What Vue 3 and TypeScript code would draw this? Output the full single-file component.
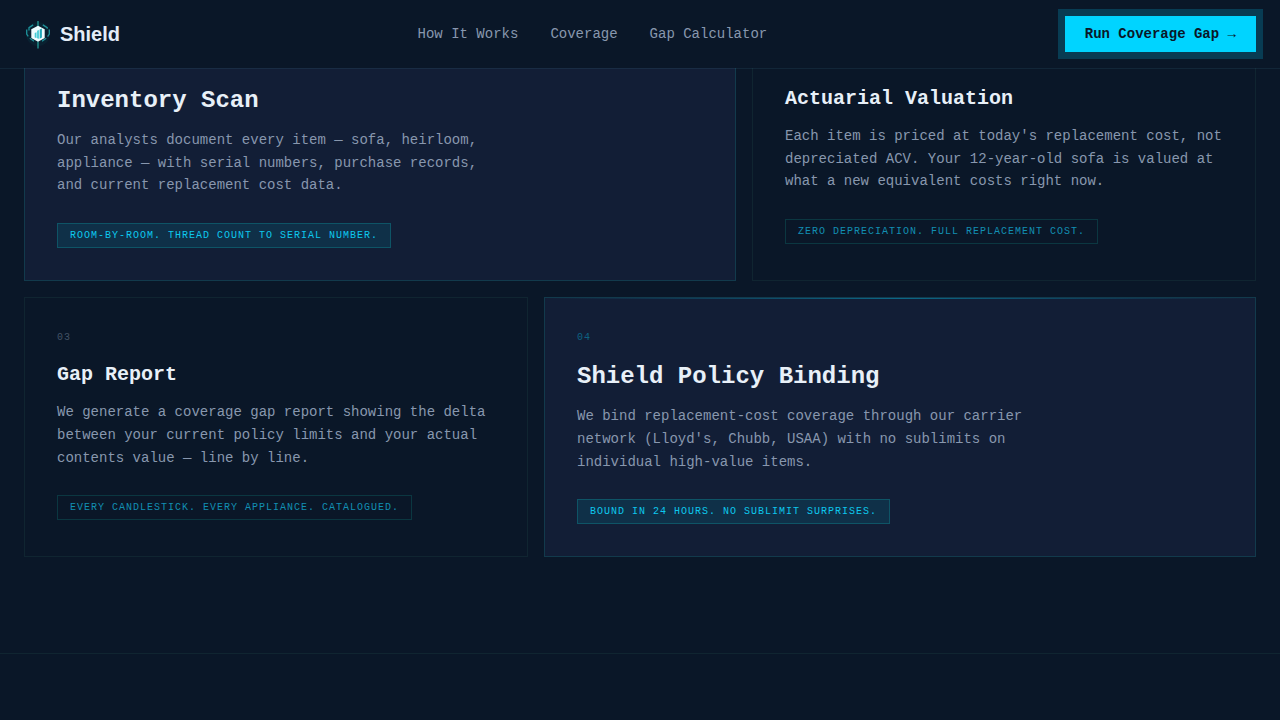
<script setup lang="ts">
interface Step {
  id: string
  title: string
  body: string
  tag: string
  featured: boolean
}

const links: string[] = ['How It Works', 'Coverage', 'Gap Calculator']

const steps: Step[] = [
  {
    id: '01',
    title: 'Inventory Scan',
    body: 'Our analysts document every item — sofa, heirloom, appliance — with serial numbers, purchase records, and current replacement cost data.',
    tag: 'Room-by-room. Thread count to serial number.',
    featured: true,
  },
  {
    id: '02',
    title: 'Actuarial Valuation',
    body: "Each item is priced at today's replacement cost, not depreciated ACV. Your 12-year-old sofa is valued at what a new equivalent costs right now.",
    tag: 'Zero depreciation. Full replacement cost.',
    featured: false,
  },
  {
    id: '03',
    title: 'Gap Report',
    body: 'We generate a coverage gap report showing the delta between your current policy limits and your actual contents value — line by line.',
    tag: 'Every candlestick. Every appliance. Catalogued.',
    featured: false,
  },
  {
    id: '04',
    title: 'Shield Policy Binding',
    body: "We bind replacement-cost coverage through our carrier network (Lloyd's, Chubb, USAA) with no sublimits on individual high-value items.",
    tag: 'Bound in 24 hours. No sublimit surprises.',
    featured: true,
  },
]
</script>

<template>
  <div class="page">
    <header class="header">
      <a class="brand">
        <svg class="logo" viewBox="0 0 28 28" fill="none">
          <circle cx="14" cy="14" r="12" fill="#0b3844" opacity="0.3" />
          <path d="M14 1v6M14 21.5v7" stroke="#2bc4b8" stroke-width="1" />
          <path
            d="M5 10.4V7.6l4.2-2.7M18.8 4.9l4.4 2.7v1.2M25.3 9.5v4.6l-1.7 2.6M2.7 9.5v4.6l1.5 2.2M5.8 18.3l4.2 3M22.2 18.3l-4.2 3"
            stroke="#1d929b"
            stroke-width="1.3"
          />
          <path d="M14 5.7l6.7 3.5v8.8L14 21.8 7.3 18V9.2z" fill="#eefcff" />
          <path d="M10.7 13l1.8-.8v5.9l-1.8-.5zM13.1 10.8l1.8-.9v8.9l-1.8-.5z" fill="#45cbd5" />
          <path d="M15.7 9.5l2.2-.9v8.8l-2.2 1.3z" fill="#20a9b9" />
        </svg>
        <span class="brand-name">Shield</span>
      </a>
      <nav class="nav">
        <a v-for="link in links" :key="link">{{ link }}</a>
      </nav>
      <button class="cta" type="button">Run Coverage Gap →</button>
    </header>

    <main class="steps">
      <article v-for="step in steps" :key="step.id" class="card" :class="{ featured: step.featured }">
        <span class="num">{{ step.id }}</span>
        <h3>{{ step.title }}</h3>
        <p>{{ step.body }}</p>
        <span class="tag">{{ step.tag }}</span>
      </article>
    </main>
    <section class="next"></section>
  </div>
</template>

<style>
body {
  margin: 0;
  background: #0a1728;
}
</style>

<style scoped>
.page {
  height: 720px;
  overflow: hidden;
  display: flex;
  flex-direction: column;
  background: #0a1728;
  font-family: 'Liberation Mono', monospace;
  color: #e8f0f8;
}
.header {
  position: relative;
  z-index: 2;
  box-sizing: border-box;
  flex: none;
  height: 69px;
  padding: 0 24px;
  display: flex;
  align-items: center;
  justify-content: space-between;
  background: #0a1728;
  background-clip: padding-box;
  border-bottom: 1px solid rgba(60, 120, 140, 0.16);
}
.brand {
  display: flex;
  align-items: center;
  gap: 8px;
}
.logo {
  width: 28px;
  height: 28px;
  overflow: visible;
}
.brand-name {
  font: bold 20px/28px 'Liberation Sans', sans-serif;
  color: #e4edf8;
}
.nav {
  display: flex;
  gap: 32px;
  font-size: 14px;
  line-height: 20px;
  color: #8897ae;
}
.cta {
  border: 0;
  padding: 8px 20px;
  font: bold 14px/20px 'Liberation Mono', monospace;
  background: #00d4ff;
  color: #0a1728;
  box-shadow: 0 0 0 7px rgba(0, 212, 255, 0.2);
}
.steps {
  flex: none;
  margin-top: -48.25px;
  padding: 0 24px 96px;
  display: grid;
  grid-template-columns: repeat(12, 1fr);
  gap: 16px;
}
.card {
  position: relative;
  box-sizing: border-box;
  grid-column: span 5;
  height: 260.25px;
  padding: 32px;
  display: flex;
  flex-direction: column;
  align-items: flex-start;
  border: 1px solid #102531;
}
.card.featured {
  grid-column: span 7;
  background: #121e36;
  border-color: #123a4c;
}
.card.featured::before {
  content: '';
  position: absolute;
  inset: 0 0 auto;
  height: 1px;
  background: linear-gradient(90deg, transparent, rgba(0, 212, 255, 0.4), transparent);
}
.num {
  font-size: 10px;
  line-height: 15px;
  letter-spacing: 1px;
  color: #435365;
  margin-bottom: 16px;
}
.featured .num {
  color: #0e6282;
}
h3 {
  margin: 0 0 12px;
  font-size: 20px;
  line-height: 28px;
  font-weight: bold;
}
.featured h3 {
  font-size: 24px;
  line-height: 32px;
}
p {
  margin: 0 0 25.75px;
  max-width: 448px;
  font-size: 14px;
  line-height: 22.75px;
  color: #8897ae;
}
.tag {
  padding: 6px 12px;
  border: 1px solid #0b3741;
  font-size: 10px;
  line-height: 11px;
  letter-spacing: 1px;
  text-transform: uppercase;
  white-space: nowrap;
  color: #128fb3;
}
.featured .tag {
  background: #0f3048;
  border-color: #0e5466;
  color: #0dc8ee;
}
.next {
  flex: 1;
  border-top: 1px solid #102531;
}
</style>
